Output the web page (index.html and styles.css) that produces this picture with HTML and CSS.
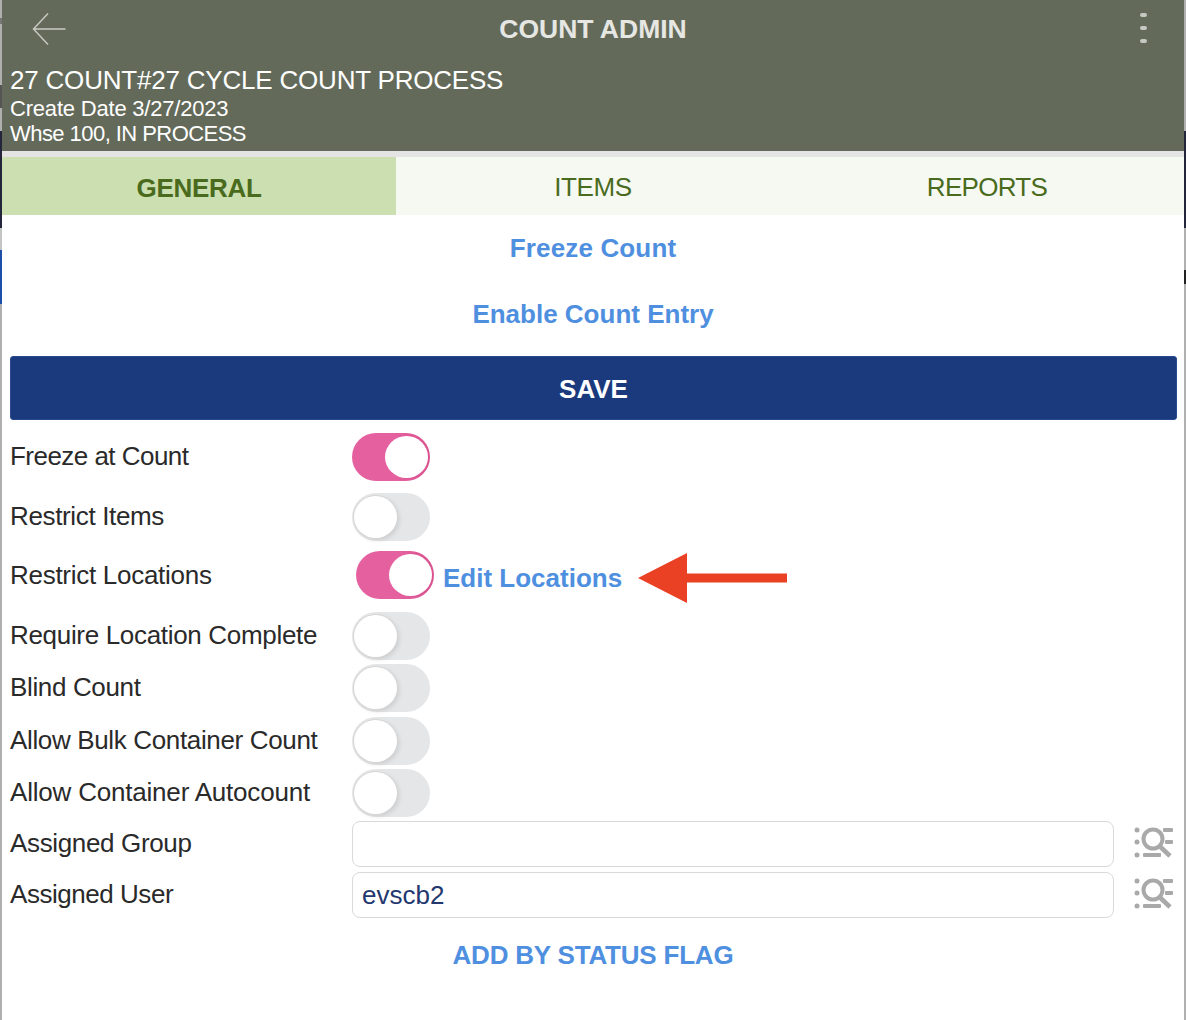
FILE: index.html
```html
<!DOCTYPE html>
<html lang="en">
<head>
<meta charset="utf-8">
<title>Count Admin</title>
<link rel="stylesheet" href="styles.css">
</head>
<body>
<div class="frame">
  <div class="app">
    <header class="header">
      <div class="topbar">
        <button class="back" aria-label="Back">
          <svg width="36" height="36" viewBox="0 0 36 36" fill="none" stroke="#c9cbc4" stroke-width="1.4"><path d="M34.5 18H3M17 2.5 2.500 18 17 33.500"/></svg>
        </button>
        <div class="title">COUNT ADMIN</div>
        <div class="kebab"><i></i><i></i><i></i></div>
      </div>
      <div class="count-name">27 COUNT#27 CYCLE COUNT PROCESS</div>
      <div class="count-meta date">Create Date 3/27/2023</div>
      <div class="count-meta whse">Whse 100, IN PROCESS</div>
    </header>
    <nav class="tabs">
      <div class="tab active">GENERAL</div>
      <div class="tab">ITEMS</div>
      <div class="tab reports">REPORTS</div>
    </nav>
    <div class="action a1"><a>Freeze Count</a></div>
    <div class="action a2"><a>Enable Count Entry</a></div>
    <button class="save">SAVE</button>

    <div class="row r1"><label>Freeze at Count</label><span class="toggle on"></span></div>
    <div class="row r2"><label>Restrict Items</label><span class="toggle"></span></div>
    <div class="row r3"><label>Restrict Locations</label><span class="toggle on shifted"></span><a class="edit">Edit Locations</a>
      <svg class="arrow" width="152" height="52" viewBox="0 0 152 52"><path fill="#ea4124" d="M2 26 51 1V21.500H151V30.500H51V51Z"/></svg>
    </div>
    <div class="row r4"><label>Require Location Complete</label><span class="toggle"></span></div>
    <div class="row r5"><label>Blind Count</label><span class="toggle"></span></div>
    <div class="row r6"><label>Allow Bulk Container Count</label><span class="toggle"></span></div>
    <div class="row r7"><label>Allow Container Autocount</label><span class="toggle"></span></div>
    <div class="row r8"><label>Assigned Group</label><div class="field"></div>
      <svg class="lookup" width="42" height="34" viewBox="0 0 42 34"><use href="#lookup-icon"/></svg>
    </div>
    <div class="row r9"><label>Assigned User</label><div class="field">evscb2</div>
      <svg class="lookup" width="42" height="34" viewBox="0 0 42 34"><use href="#lookup-icon"/></svg>
    </div>
    <div class="action a3"><a>ADD BY STATUS FLAG</a></div>
  </div>
</div>
<svg class="defs" width="0" height="0">
  <defs>
    <g id="lookup-icon" fill="#a9a9a9" stroke="none">
      <circle cx="4" cy="4" r="2.500"/><circle cx="4" cy="16" r="2.500"/><circle cx="4" cy="29" r="2.500"/>
      <rect x="30" y="2" width="10" height="4" rx="1"/><rect x="32" y="14" width="8" height="4" rx="1"/><rect x="10" y="27" width="18" height="4" rx="1"/>
      <circle cx="20" cy="13" r="9.500" fill="none" stroke="#a9a9a9" stroke-width="4"/>
      <path d="M26.500 20 37 30" fill="none" stroke="#a9a9a9" stroke-width="4.500"/>
    </g>
  </defs>
</svg>
</body>
</html>
```
FILE: styles.css
```css
* { box-sizing: border-box; }
html, body { margin: 0; height: 100%; }
body {
  font-family: "Liberation Sans", Arial, sans-serif;
  background: #fff;
  overflow: hidden;
}
a { cursor: pointer; }
.frame {
  height: 1020px;
  padding: 0 2px;
  background:
    linear-gradient(to bottom, #b0b0b0 0, #b0b0b0 18px, #777 18px, #777 24px, #b0b0b0 24px, #b0b0b0 85px, #555 85px, #555 108px, #b0b0b0 108px, #b0b0b0 131px, #23263a 131px, #23263a 228px, #c4c4c4 228px, #c4c4c4 250px, #1d4fa8 250px, #1d4fa8 304px, #b0b0b0 304px, #b0b0b0 1020px) left top / 2px 100% no-repeat,
    linear-gradient(to bottom, #b0b0b0 0, #b0b0b0 131px, #23263a 131px, #23263a 228px, #b0b0b0 228px, #b0b0b0 270px, #222 270px, #222 284px, #b0b0b0 284px, #b0b0b0 1020px) right top / 2px 100% no-repeat,
    #fff;
}
.app { height: 100%; background: #fff; }

.header {
  height: 151px;
  background: #646a5a;
  color: #fff;
  padding: 0 8px;
}
.topbar { height: 64px; display: flex; align-items: center; justify-content: space-between; position: relative; }
.back { background: none; border: 0; padding: 0; margin: -7px 0 0 21px; width: 36px; height: 36px; }
.back svg { display: block; }
.title {
  position: absolute; left: 0; right: 0; top: 15px; text-align: center;
  font-size: 26.500px; line-height: 29px; font-weight: 700; color: #e6e7e3; margin-left: -8px; margin-right: -8px;
}
.kebab { display: flex; flex-direction: column; gap: 9px; margin: -8px 29px 0 0; }
.kebab i { display: block; width: 7px; height: 4px; border-radius: 2px; background: #c6c8c1; }
.count-name { font-size: 26px; line-height: 32px; letter-spacing: -.2px; }
.count-meta { font-size: 22px; line-height: 25px; }
.date { letter-spacing: -.2px; }
.whse { letter-spacing: -.55px; }

.tabs {
  margin-top: 6px;
  height: 58px;
  display: grid;
  grid-template-columns: repeat(3, 1fr);
  background: #f6f9f2;
  position: relative;
}
.tabs::before { content: ""; position: absolute; left: 0; right: 0; top: -6px; height: 6px; background: #e4e4e4; }
.tab { display: flex; align-items: center; justify-content: center; font-size: 26px; color: #4a6b1d; padding-top: 2px; letter-spacing: -.4px; }
.tab.active { background: #cbdfb0; font-weight: 700; padding-top: 4px; letter-spacing: -.3px; }
.tab.reports { letter-spacing: -.7px; }

.action { display: flex; justify-content: center; font-size: 26px; line-height: 30px; font-weight: 700; color: #4f8fe0; }
.a1 { margin-top: 18px; letter-spacing: .15px; }
.a2 { margin-top: 36px; }
.a3 { margin-top: 22px; letter-spacing: -.2px; }

.save {
  display: block;
  width: calc(100% - 15px);
  margin: 27px 7px 0 8px;
  height: 64px;
  padding: 3px 0 0;
  border: 1px solid #2a4a8f;
  border-radius: 3px;
  background: #1a3a7d;
  color: #fff;
  font: 700 26px "Liberation Sans", Arial, sans-serif;
}

.row { display: flex; align-items: center; height: 48px; padding-left: 8px; position: relative; font-size: 26px; color: #2a2a2a; }
.row label { width: 342px; flex: none; letter-spacing: -.35px; }
.r1 label { letter-spacing: -.53px; }
.r3 label { letter-spacing: -.28px; }
.r4 label { letter-spacing: -.32px; }
.r7 label { letter-spacing: -.2px; }
.r9 label { letter-spacing: -.46px; }
.r1 { margin-top: 13px; }
.r2 { margin-top: 12px; }
.r3 { margin-top: 10px; }
.r4 { margin-top: 13px; }
.r5 { margin-top: 4px; }
.r6 { margin-top: 5px; }
.r7 { margin-top: 4px; }
.r8 { margin-top: 4px; height: 46px; }
.r9 { margin-top: 5px; height: 46px; }
.r8 label, .r9 label, .r1 label, .r2 label, .r4 label, .r5 label, .r6 label, .r7 label { position: relative; top: -1px; }

.toggle {
  width: 78px; height: 48px; flex: none; border-radius: 24px;
  background: #e5e6e8;
  position: relative;
}
.toggle::after {
  content: ""; position: absolute; top: 3px; left: 2px; width: 43px; height: 42px; border-radius: 50%;
  background: #fff;
  box-shadow: 0 0 0 1px #d6d6d6, 2px 2px 5px rgba(0,0,0,.12);
}
.toggle.on { background: linear-gradient(to right, #e5609f 55%, #d9528f 100%); }
.toggle.on::after { left: 33px; box-shadow: none; }
.toggle.shifted { margin-left: 4px; }
.edit { margin-left: 9px; font-weight: 700; color: #4f8fe0; position: relative; top: 3px; }
.arrow { position: absolute; left: 634px; top: 1px; }

.field {
  width: 762px; height: 46px; flex: none;
  border: 1px solid #d9d9d9; border-radius: 8px;
  padding: 0 9px; display: flex; align-items: center;
  font-size: 26px; color: #23386f;
}
.lookup { margin-left: 19px; flex: none; position: relative; top: -1px; }
.defs { position: absolute; }
```
